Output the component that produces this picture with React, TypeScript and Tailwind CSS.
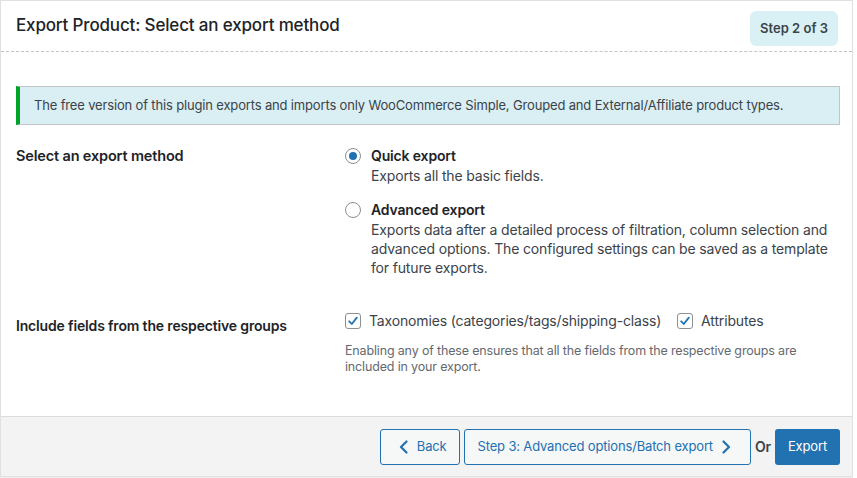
const font = { fontFamily: 'Inter, "Liberation Sans", Arial, sans-serif' };

const Radio = ({ checked }: { checked?: boolean }) => (
  <span className="mt-[2px] flex h-4 w-4 flex-shrink-0 items-center justify-center rounded-full border border-[#8c8f94] bg-white">
    {checked && <span className="h-2 w-2 rounded-full bg-[#2271b1]"></span>}
  </span>
);

const Check = () => (
  <span className="flex h-4 w-4 flex-shrink-0 items-center justify-center rounded-[3px] border border-[#8c8f94] bg-white">
    <svg width="12" height="12" viewBox="0 0 12 12" fill="none">
      <path d="M2.2 6.3 4.8 9 9.8 2.6" stroke="#2271b1" strokeWidth="1.8" strokeLinecap="round" strokeLinejoin="round" />
    </svg>
  </span>
);

const Chevron = ({ dir }: { dir: 'left' | 'right' }) => (
  <svg width="9" height="14" viewBox="0 0 9 14" fill="none">
    <path
      d={dir === 'left' ? 'M7.5 1.5 2 7l5.5 5.5' : 'M1.5 1.5 7 7l-5.5 5.5'}
      stroke="currentColor"
      strokeWidth="2.2"
      strokeLinecap="round"
      strokeLinejoin="round"
    />
  </svg>
);

const App = () => (
  <div className="h-[478px] w-[857px] bg-white tracking-[-0.01em] text-[#3c434a]" style={font}>
    <div className="w-[853px] border border-[#e0e0e0] bg-white shadow-[0_1px_1px_rgba(0,0,0,0.06)]">
      <div className="flex h-[51px] items-center justify-between border-b border-dashed border-[#c3c4c7] pl-[15px] pr-[14px]">
        <h2 className="text-[17px] font-medium text-[#1d2327]">Export Product: Select an export method</h2>
        <div className="mt-[5px] flex h-[35px] items-center rounded-md bg-[#d9f1f5] px-[10px] text-[13px] font-semibold tracking-normal text-[#3c434a]">
          Step 2 of 3
        </div>
      </div>

      <div className="pl-[15px] pr-3 pt-[34px]">
        <div className="flex h-[39px] items-center border border-l-4 border-[#c3c4c7] border-l-[#00a32a] bg-[#d9eff3] pl-[14px] text-[13px] text-[#3c434a]">
          The free version of this plugin exports and imports only WooCommerce Simple, Grouped and External/Affiliate product types.
        </div>

        <div className="mt-[21px] flex">
          <div className="w-[329px] flex-shrink-0 text-[14.5px] font-semibold leading-5 text-[#1d2327]">Select an export method</div>
          <div className="flex flex-col gap-[14px] text-[14px]">
            <div className="flex gap-[10px]">
              <Radio checked />
              <div>
                <div className="font-semibold leading-5 text-[#1d2327]">Quick export</div>
                <div className="leading-5">Exports all the basic fields.</div>
              </div>
            </div>
            <div className="flex gap-[10px]">
              <Radio />
              <div>
                <div className="font-semibold leading-5 text-[#1d2327]">Advanced export</div>
                <div className="w-[466px] leading-[19px]">
                  Exports data after a detailed process of filtration, column selection and advanced options. The configured settings can be saved as a template for future exports.
                </div>
              </div>
            </div>
          </div>
        </div>

        <div className="mt-[34px] flex">
          <div className="w-[329px] flex-shrink-0 pt-[5px] text-[14px] font-semibold leading-5 text-[#1d2327]">
            Include fields from the respective groups
          </div>
          <div>
            <div className="flex items-center text-[14px] leading-5">
              <Check />
              <span className="ml-2">Taxonomies (categories/tags/shipping-class)</span>
              <span className="ml-4"><Check /></span>
              <span className="ml-2">Attributes</span>
            </div>
            <div className="mt-[12px] w-[470px] text-[12.5px] leading-4 text-[#646970]">
              Enabling any of these ensures that all the fields from the respective groups are included in your export.
            </div>
          </div>
        </div>
      </div>

      <div className="mt-[41px] flex h-[60px] items-center justify-end gap-1 border-t border-[#dcdcde] bg-[#f3f3f3] pr-[12px] text-[13px]">
        <button className="flex h-9 items-center gap-[9px] rounded-[3px] border border-[#2271b1] bg-[#f6f7f7] pl-[18px] pr-[12px] text-[#2271b1]">
          <Chevron dir="left" />
          Back
        </button>
        <button className="flex h-9 items-center gap-[9px] rounded-[3px] border border-[#2271b1] bg-[#f6f7f7] pl-[13px] pr-[19px] text-[#2271b1]">
          Step 3: Advanced options/Batch export
          <Chevron dir="right" />
        </button>
        <span className="text-[14px] font-semibold text-[#3c434a]">Or</span>
        <button className="h-9 rounded-[3px] bg-[#2271b1] px-[13px] text-white">Export</button>
      </div>
    </div>
  </div>
);

export default App;
